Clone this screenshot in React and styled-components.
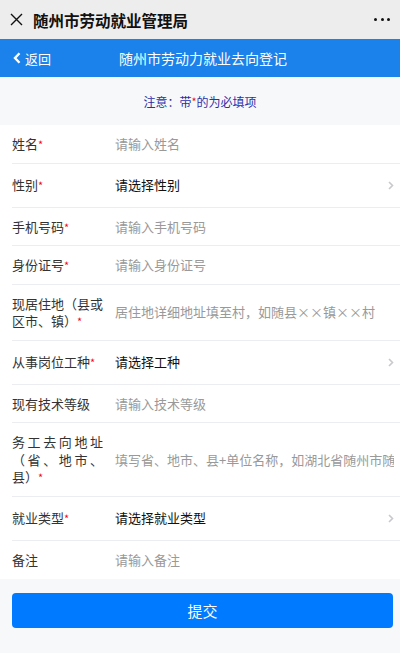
import styled, { createGlobalStyle } from "styled-components";

const GlobalStyle = createGlobalStyle`
  body {
    margin: 0;
    background: #f7f8fa;
    font-family: "Noto Sans CJK SC", "Noto Sans", sans-serif;
  }
  * {
    box-sizing: border-box;
  }
`;

const fields = [
  { label: "姓名", required: true, placeholder: "请输入姓名" },
  { label: "性别", required: true, select: "请选择性别" },
  { label: "手机号码", required: true, placeholder: "请输入手机号码" },
  { label: "身份证号", required: true, placeholder: "请输入身份证号" },
  {
    label: "现居住地（县或区市、镇）",
    required: true,
    placeholder: "居住地详细地址填至村，如随县××镇××村",
  },
  { label: "从事岗位工种", required: true, select: "请选择工种" },
  { label: "现有技术等级", placeholder: "请输入技术等级" },
  {
    label: "务工去向地址（省、地市、县）",
    required: true,
    placeholder: "填写省、地市、县+单位名称，如湖北省随州市随县",
  },
  { label: "就业类型", required: true, select: "请选择就业类型" },
  { label: "备注", placeholder: "请输入备注" },
];

const App = () => {
  return (
    <Page>
      <GlobalStyle />
      <TopBar>
        <svg width="13" height="13" viewBox="0 0 13 13">
          <path d="M1 1l11 11M12 1L1 12" stroke="#111" strokeWidth="1.4" />
        </svg>
        <AppTitle>随州市劳动就业管理局</AppTitle>
        <Dots>
          <span />
          <span />
          <span />
        </Dots>
      </TopBar>

      <NavBar>
        <Back>
          <svg width="8" height="12" viewBox="0 0 8 12">
            <path
              d="M6.5 1.2L2 6l4.5 4.8"
              fill="none"
              stroke="#fff"
              strokeWidth="2.4"
            />
          </svg>
          返回
        </Back>
        <NavTitle>随州市劳动力就业去向登记</NavTitle>
        <span />
      </NavBar>

      <Notice>
        注意：带<Star>*</Star>的为必填项
      </Notice>

      <Form>
        {fields.map((f) => (
          <Field key={f.label} $tall={!!f.select}>
            <Label>
              {f.label}
              {f.required && <Star>*</Star>}
            </Label>
            {f.select ? (
              <>
                <SelectValue>{f.select}</SelectValue>
                <svg width="6" height="9" viewBox="0 0 6 9">
                  <path
                    d="M1 1l3.5 3.5L1 8"
                    fill="none"
                    stroke="#c8c9cc"
                    strokeWidth="1.6"
                  />
                </svg>
              </>
            ) : (
              <Input placeholder={f.placeholder} />
            )}
          </Field>
        ))}
      </Form>

      <Actions>
        <Submit>提交</Submit>
      </Actions>
    </Page>
  );
};

const Page = styled.div`
  min-height: 653px;
  background: #f7f8fa;
`;

const TopBar = styled.header`
  height: 39px;
  background: #ededed;
  display: flex;
  align-items: center;
  padding: 0 10px;
  gap: 10px;
`;

const AppTitle = styled.h1`
  flex: 1;
  margin: 0;
  font-size: 15.5px;
  font-weight: 700;
  color: #111;
`;

const Dots = styled.div`
  display: flex;
  gap: 3.5px;
  span {
    width: 3px;
    height: 3px;
    border-radius: 50%;
    background: #111;
  }
`;

const NavBar = styled.nav`
  height: 38px;
  background: #1a82ea;
  display: grid;
  grid-template-columns: 1fr auto 1fr;
  align-items: center;
  padding: 0 13px;
  color: #fff;
`;

const Back = styled.div`
  display: flex;
  align-items: center;
  gap: 4px;
  font-size: 13px;
`;

const NavTitle = styled.div`
  font-size: 14px;
  padding-left: 6px;
`;

const Notice = styled.div`
  height: 48px;
  display: flex;
  align-items: center;
  justify-content: center;
  font-size: 12px;
  color: #2b2fa8;
`;

const Star = styled.span`
  color: #ee0a24;
  font-size: 11px;
  line-height: 1;
`;

const Form = styled.section`
  background: #fff;
`;

const Field = styled.div`
  display: flex;
  align-items: center;
  margin-left: 12px;
  padding: 10px 6px 10px 0;
  min-height: ${(p) => (p.$tall ? "44px" : "38px")};
  border-bottom: 1px solid #ebedf0;
  font-size: 13px;
  line-height: 17.5px;
  &:last-child {
    border-bottom: none;
  }
`;

const Label = styled.label`
  flex-shrink: 0;
  width: 91px;
  margin-right: 12px;
  color: #333;
  text-align: justify;
  text-spacing-trim: space-all;
`;

const Input = styled.input`
  flex: 1;
  min-width: 0;
  border: none;
  outline: none;
  padding: 0;
  background: transparent;
  font: inherit;
  color: #333;
  &::placeholder {
    color: #999;
  }
`;

const SelectValue = styled.span`
  flex: 1;
  color: #111;
`;

const Actions = styled.div`
  padding: 14px 7px 0 12px;
`;

const Submit = styled.button`
  width: 100%;
  height: 35px;
  border: none;
  border-radius: 4px;
  background: #007aff;
  color: #fff;
  font-family: inherit;
  font-size: 15px;
`;

export default App;
